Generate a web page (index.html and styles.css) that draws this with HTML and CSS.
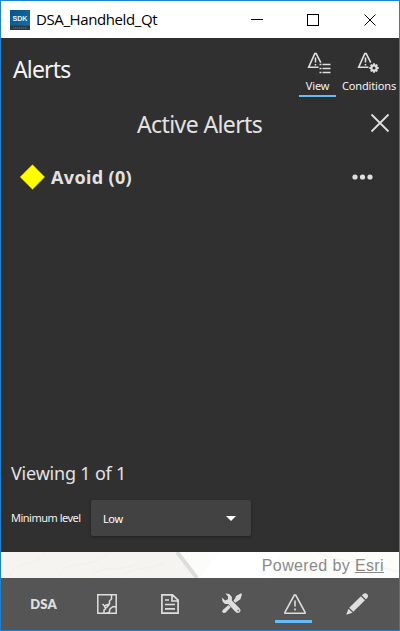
FILE: index.html
```html
<!DOCTYPE html>
<html lang="en">
<head>
<meta charset="utf-8">
<title>DSA_Handheld_Qt</title>
<link rel="stylesheet" href="styles.css">
</head>
<body>
<div class="window">
  <header class="titlebar">
    <svg class="app-icon" width="20" height="20" viewBox="0 0 20 20">
      <defs><linearGradient id="blue" x1="0" y1="0" x2="1" y2="1"><stop offset="0" stop-color="#075383"/><stop offset="1" stop-color="#1673ad"/></linearGradient></defs>
      <rect width="20" height="20" fill="url(#blue)"/>
      <rect y="15.5" width="20" height="4.5" fill="#303840"/>
      <path d="M3 18h14" stroke="#66717a" stroke-dasharray="1.5 .5"/>
      <text x="2.5" y="11.2" class="sdk" textLength="15" lengthAdjust="spacingAndGlyphs">SDK</text>
    </svg>
    <span class="window-title">DSA_Handheld_Qt</span>
    <svg class="window-controls" width="126" height="14" viewBox="0 0 126 14" fill="none" stroke="#000" stroke-width="1">
      <path d="M0 6.500h12M56.500 1.500h11v11h-11z" shape-rendering="crispEdges"/>
      <path d="M113.500 1.500l11 11M124.500 1.500l-11 11"/>
    </svg>
  </header>
  <main class="panel">
    <div class="panel-header">
      <h1 class="panel-title">Alerts</h1>
      <nav class="tabs">
        <div class="tab tab-view active">
          <svg width="24" height="22" viewBox="0 0 24 22" fill="none" stroke="#dedede" stroke-width="1.600">
            <path d="M11.500 15.200H1.700L7.800 1.600h1.400l4.600 9M8.500 5.500v5M8.500 12v1.500"/>
            <path d="M12.500 12.500h2M15.500 12.500h8M12.500 16.500h2M15.500 16.500h8M12.500 20.500h2M15.500 20.500h8"/>
          </svg>
          <span class="tab-label">View</span>
        </div>
        <div class="tab tab-conditions">
          <svg width="24" height="22" viewBox="0 0 24 22" fill="none" stroke="#dedede" stroke-width="1.600">
            <path d="M11.500 15.200H1.700L7.800 1.600h1.400l4.600 9M8.500 5.500v5M8.500 12v1.500"/>
            <circle cx="17" cy="16" r="2.600" stroke-width="2.200"/>
            <path d="M17 11.300v2M17 18.700v2M12.300 16h2M19.700 16h2M13.700 12.700l1.300 1.300M19 18l1.300 1.300M20.300 12.700l-1.300 1.300M15 18l-1.300 1.300" stroke-width="1.800"/>
          </svg>
          <span class="tab-label">Conditions</span>
        </div>
      </nav>
    </div>
    <div class="subheader">
      <h2 class="subtitle">Active Alerts</h2>
      <svg class="close" width="20" height="20" viewBox="0 0 20 20" stroke="#dfdfdf" stroke-width="1.800"><path d="M1.500 1.500l17 17M18.500 1.500l-17 17"/></svg>
    </div>
    <div class="alert-row">
      <svg width="26" height="26" viewBox="0 0 26 26"><path d="M13.500 .7L25.600 13 13.500 25.300 1.200 13z" fill="#ff0" stroke="#d6d600" stroke-width=".6"/></svg>
      <span class="alert-name">Avoid (0)</span>
      <svg class="more" width="21" height="6" viewBox="0 0 21 6" fill="#dfdfdf"><circle cx="3" cy="3" r="2.600"/><circle cx="10.500" cy="3" r="2.600"/><circle cx="18" cy="3" r="2.600"/></svg>
    </div>
    <div class="filters">
      <p class="viewing">Viewing 1 of 1</p>
      <div class="level-row">
        <span class="level-label">Minimum level</span>
        <div class="select"><span class="select-value">Low</span><svg width="10" height="5" viewBox="0 0 10 5"><path d="M0 0h10L5 5z" fill="#fff"/></svg></div>
      </div>
    </div>
  </main>
  <div class="map-strip">
    <svg class="map-art" width="398" height="26" viewBox="0 0 398 26" fill="none">
      <path d="M0 0h178l20 26H0z" fill="#f5f4f1"/>
      <path d="M178 0h220v26H198z" fill="#fcfdfb"/>
      <path d="M198 26l22-26h60l-15 26z" fill="#fff"/>
      <path d="M10 26C5 8 40 16 44 0M60 26c-4-20 34-7 48-26M88 26c12-16 38-2 54-20M120 26c8-13 28-6 44-16M318 0c15 10 40 8 80 20" stroke="#f0f0ec"/>
      <path d="M176 0l20 26" stroke="#dedddc" stroke-width="4"/>
    </svg>
    <p class="credit">Powered by <a>Esri</a></p>
  </div>
  <nav class="toolbar">
    <div class="tool"><span class="dsa">DSA</span></div>
    <div class="tool">
      <svg width="20" height="20" viewBox="0 0 20 20" fill="none" stroke="#dedede" stroke-width="1.500"><path d="M.8.8h18.400v18.400H.8z"/><path d="M14.500 1v4l-2 2v3l-3 1-2 1-2-2M7.500 12l1 3-1.500 1v3M9 14l3-3M12 19l1-4 3-2.500 3 .5M11.500 19h-2"/></svg>
    </div>
    <div class="tool">
      <svg width="18" height="20" viewBox="0 0 18 20" fill="none" stroke="#dedede" stroke-width="1.700"><path d="M.9.9h10.600l5.600 5.300v12.900H.9zM11 1v6h6M4 6h4M4 10.500h10M4 14.800h10"/></svg>
    </div>
    <div class="tool">
      <svg width="20" height="21" viewBox="0 0 20 21" fill="#dedede"><path d="M3.500.5L7.200 1l2.700 3v3.500l7.900 8 .9 2-1.200 2-2 .5-2-1L6.300 11H3L.5 8.500 0 4.500 3.200 7.500 6 6.200 6 3.500z"/><path d="M19 .3l1 1-1.600 5-3.100 2-2 1.500-1.900-2L13.300 5 14 3zM6.500 12l2.200 2.200-5.200 5.600-2.200.2L0 18.500 1 16.800z"/><circle cx="16.300" cy="17.600" r="1" fill="#777"/></svg>
    </div>
    <div class="tool selected">
      <svg width="22" height="20" viewBox="0 0 22 20" fill="none" stroke="#dedede" stroke-width="1.600"><path d="M10.300 1h1.400L21 18.200v1H1v-1zM11 6.500v6M11 14.500v2"/></svg>
    </div>
    <div class="tool">
      <svg width="22" height="22" viewBox="0 0 22 22" fill="#dedede"><path d="M16.800 1.400Q19 -.8 21.100 1.100T20.800 5.400L19.800 6.300 15.800 2.300zM14.900 3.200l4 4L7.300 18.800 3.200 14.700zM2.500 15.700l4 4L.2 21.800z"/></svg>
    </div>
  </nav>
</div>
</body>
</html>
```
FILE: styles.css
```css
* { box-sizing: border-box; }
body { margin: 0; font-family: "Noto Sans", sans-serif; background: #303030; }
h1, h2, p { margin: 0; font-weight: 400; }
svg { display: block; flex: none; }
span, h1, h2, p { white-space: nowrap; }
.window { width: 400px; height: 631px; border: 1px solid #1a82d9; display: flex; flex-direction: column; overflow: hidden; }
.titlebar { height: 37px; background: #fff; display: flex; align-items: center; padding: 0 22px 0 9px; flex: none; }
.sdk { font: bold 8px "Liberation Sans", sans-serif; fill: #e4f3fc; }
.window-title { font-family: "Open Sans", sans-serif; font-size: 15px; margin: -2px 0 0 6px; color: #000; letter-spacing: -.4px; line-height: 20px; }
.window-controls { margin-left: auto; }
.panel { flex: 1; background: #303030; color: #e2e2e2; display: flex; flex-direction: column; }
.panel-header { display: flex; justify-content: space-between; height: 60px; }
.panel-title { font-size: 23px; line-height: 30px; padding: 16px 0 0 12px; letter-spacing: -.85px; color: #f4f4f4; }
.tabs { display: flex; gap: 3px; }
.tab { display: flex; flex-direction: column; align-items: center; height: 59px; padding-top: 14px; border-bottom: 2px solid transparent; }
.tab-view { width: 37px; }
.tab svg { margin-left: 2px; }
.tab-conditions { width: 60px; }
.tab-conditions svg { margin-left: 0; }
.tab.active { border-color: #65bdf7; }
.tab-label { font-size: 11px; line-height: 14px; margin-top: 5px; color: #f2f2f2; letter-spacing: -.15px; }
.subheader { height: 50px; display: flex; align-items: center; padding: 0 9px 0 136px; }
.subtitle { font-size: 23px; line-height: 30px; letter-spacing: -.6px; padding-top: 1px; }
.close { margin-left: auto; }
.alert-row { display: flex; align-items: center; height: 57px; padding: 0 26px 0 18px; }
.alert-name { font-weight: 700; font-size: 18px; line-height: 26px; margin-left: 6px; letter-spacing: .35px; }
.more { margin-left: auto; }
.filters { margin-top: auto; padding: 0 10px 16px; }
.viewing { font-size: 18px; line-height: 24px; letter-spacing: -.2px; }
.level-row { display: flex; align-items: center; margin-top: 15px; }
.level-label { width: 80px; font-size: 11px; color: #f2f2f2; letter-spacing: -.5px; margin-top: -2px; }
.select { width: 160px; height: 36px; background: #424242; border-radius: 2px; box-shadow: 0 1px 3px #202020; display: flex; align-items: center; justify-content: space-between; padding: 0 15px 0 12px; color: #fff; font-size: 11px; letter-spacing: -.4px; }
.map-strip { height: 26px; position: relative; background: #f8f8f5; flex: none; }
.map-art { position: absolute; inset: 0; }
.credit { position: relative; font: 16px/27px "Liberation Sans", Arial, sans-serif; color: #8a8a8a; text-align: right; padding-right: 15px; letter-spacing: .38px; }
.credit a { text-decoration: underline; }
.toolbar { height: 52px; flex: none; background: #555; display: grid; grid-template-columns: repeat(6, 37px); column-gap: 25.500px; padding-left: 24px; }
.tool { display: flex; flex-direction: column; align-items: center; justify-content: center; height: 45px; border-bottom: 3px solid transparent; padding-top: 9px; }
.tool svg { margin-left: 2px; }
.tool.selected { border-color: #65bdf7; }
.dsa { font: 800 13px/18px Lato, sans-serif; color: #dedede; letter-spacing: .2px; }
```
